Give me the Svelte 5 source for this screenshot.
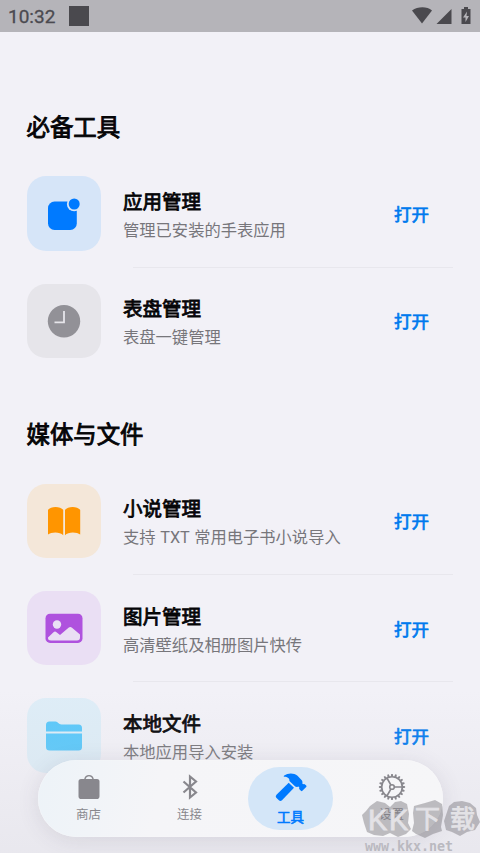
<script lang="ts">
	type Tool = { icon: string; title: string; desc: string };

	const sections: { name: string; tools: Tool[] }[] = [
		{
			name: "必备工具",
			tools: [
				{ icon: "app", title: "应用管理", desc: "管理已安装的手表应用" },
				{ icon: "clock", title: "表盘管理", desc: "表盘一键管理" },
			],
		},
		{
			name: "媒体与文件",
			tools: [
				{ icon: "book", title: "小说管理", desc: "支持 TXT 常用电子书小说导入" },
				{ icon: "photo", title: "图片管理", desc: "高清壁纸及相册图片快传" },
				{ icon: "folder", title: "本地文件", desc: "本地应用导入安装" },
			],
		},
	];

	const tabs = [
		{ icon: "shop", label: "商店" },
		{ icon: "bluetooth", label: "连接" },
		{ icon: "hammer", label: "工具" },
		{ icon: "gear", label: "设置" },
	];

	const teeth = Array.from({ length: 20 }, (_, i) => i * 18);

	let active = $state("hammer");
</script>

<div class="screen">
	<header class="status">
		<span class="time">10:32</span>
		<span class="square"></span>
		<svg class="signals" width="60" height="20" viewBox="0 0 60 20">
			<path d="M0 4.5C6 .3 15 .3 20 4.5L10 17.500z" />
			<path d="M39.500 3v15H24.500z" />
			<path d="M52 1h4v2h2.500v15h-9V3H52z" />
			<path class="bolt" d="M55 5.500l-4 6h2.500V16l3.500-6h-2.500z" />
		</svg>
	</header>

	<main>
		{#each sections as section}
			<section>
				<h2>{section.name}</h2>
				{#each section.tools as tool}
					<div class="row">
						<div class="tile {tool.icon}">
							<svg width="40" height="40" viewBox="0 0 40 40">
								{#if tool.icon === "app"}
									<rect x="4" y="7.500" width="28.800" height="28.500" rx="6.500" />
									<circle class="halo" cx="30.200" cy="10" r="7.300" />
									<circle cx="30.200" cy="10" r="5.500" />
								{:else if tool.icon === "clock"}
									<circle cx="20" cy="20.300" r="16.200" />
									<path class="cut" d="M20 10v11.300h-9.500" />
								{:else if tool.icon === "book"}
									<path d="M4 9c2.500-4 12.500-4 15.200 0v25.300c-3-3.800-12-3.500-15.200-.8z" />
									<path d="M21 9c2.700-4 12.500-4 15.200 0v24.500c-3.200-2.700-12.200-3-15.200.8z" />
								{:else if tool.icon === "photo"}
									<rect x="1.500" y="5.700" width="37" height="29.200" rx="4.500" />
									<circle class="light" cx="13" cy="16.500" r="4.200" />
									<path class="light" d="M4 29.500l5.500-5.300q1.500-1.300 3 0l3.500 2.800 8.500-7.300q1.800-1.300 3.500 0L36 26.500v3q0 3-3 3H7q-3 0-3-2.500z" />
								{:else}
									<path d="M2 15.500V9q0-3.500 3.500-3.500h6c2.500 0 3 3 6 3H34.500Q38 8.500 38 12v3.500z" />
									<path d="M2 17.500h36V31q0 3.500-3.500 3.500h-29Q2 34.500 2 31z" />
								{/if}
							</svg>
						</div>
						<div class="text">
							<h3>{tool.title}</h3>
							<p>{tool.desc}</p>
						</div>
						<button class="open">打开</button>
					</div>
				{/each}
			</section>
		{/each}
	</main>

	<div class="shade"></div>

	<nav>
		{#each tabs as tab}
			<button class="tab" class:active={active === tab.icon} onclick={() => (active = tab.icon)}>
				<svg width="32" height="32" viewBox="0 0 32 32">
					{#if tab.icon === "shop"}
						<path d="M8 8h3.200a4.900 4.900 0 0 1 9.600 0H24q2.500 0 2.500 2.500v14.700q0 2.800-2.800 2.800H8.300q-2.800 0-2.800-2.800V10.500Q5.500 8 8 8zm4.600 0h6.800a3.500 3.500 0 0 0-6.800 0z" />
					{:else if tab.icon === "bluetooth"}
						<path class="line bt" d="M9.500 10.500l12.500 11-6 5V5.500l6 5L9.500 21.500" />
					{:else if tab.icon === "hammer"}
						<path d="M9.200 4.500C13 1.800 19 1.700 22.500 4.800L26.500 9c1 1 1.200 2.200.8 3.600l.9.700q.8-.6 1.500 0l1.500 1.300q.7.700 0 1.500l-3.800 3.700q-.8.700-1.500 0l-1.500-1.500q-.7-.8 0-1.600l-.9-1.100c-1.500.6-3 .3-4.100-.9l-5-4.600c.4-2.600-1.800-4.300-5.200-4.300q-1.200-.2 0-1.300z" />
						<path d="M13.700 11.800l5.300 5L7 29.300q-1.600 1.400-3.100 0l-2.600-2.500q-1.300-1.500.2-3z" />
					{:else}
						<circle class="line" cx="16" cy="16" r="10.300" />
						<circle class="line" cx="16" cy="16" r="2.300" />
						<path class="line" d="M18.300 16h8M14.900 14l-4-7M14.900 18l-4 7" />
						{#each teeth as angle}
							<path class="tooth" d="M15.200 2.900h1.600l.4 2.600h-2.400z" transform="rotate({angle} 16 16)" />
						{/each}
					{/if}
				</svg>
				<span>{tab.label}</span>
			</button>
		{/each}
	</nav>

	<div class="mark">
		<svg width="120" height="50" viewBox="0 0 120 50">
			<path d="M8 7l7-5 8 2 5 4 5-5 6-1 6 3 2 10-1 9 3 6-5 5-8 3-8-4-7 3-9-1-7-3-3-9-2-8 4-4z" />
			<path d="M52 7l11-3 10-3 7 4 1 11-2 12 1 4-9 3-8 4-9-4-4-3 2-8-1-10z" />
			<path d="M87 7l5-4 8-1 8 2 6 5 1 7 3 7-5 8-8 2-7 4-8-4-6-2-2-9 2-6z" />
			<text x="6" y="31">K</text>
			<text x="27" y="31">K</text>
			<text x="53" y="29" class="cjk">下</text>
			<text x="88" y="29" class="cjk">载</text>
		</svg>
		<span>www.kkx.net</span>
	</div>
</div>

<style>
	:global(body) {
		margin: 0;
		background: #f2f1f7;
	}
	.screen {
		position: relative;
		width: 480px;
		height: 853px;
		overflow: hidden;
		background: #f2f1f7;
		font-family: "Noto Sans CJK SC", sans-serif;
		color: #050507;
	}
	.status {
		display: flex;
		align-items: center;
		box-sizing: border-box;
		height: 32px;
		padding: 0 8px;
		background: #b5b4b9;
	}
	.time {
		width: 61px;
		padding-top: 2px;
		font: 400 19px/34px Roboto, sans-serif;
		-webkit-text-stroke: 0.300px;
		color: #4b4a50;
	}
	.square {
		width: 20px;
		height: 20px;
		background: #4a494e;
	}
	.signals {
		margin-left: auto;
		fill: #4a494e;
	}
	.bolt {
		fill: #b5b4b9;
	}
	h2 {
		box-sizing: border-box;
		height: 92.700px;
		margin: 0;
		padding: 25px 26.500px 0;
		font-size: 23.400px;
		font-weight: 400;
		line-height: 67px;
		-webkit-text-stroke: 0.900px;
	}
	section:first-child h2 {
		height: 128px;
		padding-top: 61px;
	}
	.row {
		position: relative;
		display: flex;
		align-items: center;
		height: 107.300px;
		padding: 0 51px 0 26.500px;
	}
	.row:not(:last-child)::after {
		content: "";
		position: absolute;
		left: 133px;
		right: 27px;
		bottom: -0.500px;
		height: 1px;
		background: #e8e7ed;
	}
	.tile {
		display: grid;
		place-items: center;
		width: 74.500px;
		height: 74.500px;
		border-radius: 19px;
		background: var(--soft);
		fill: var(--ink);
	}
	.app {
		--ink: #007aff;
		--soft: #d6e5f8;
	}
	.clock {
		--ink: #929197;
		--soft: #e6e5ea;
	}
	.book {
		--ink: #ff9500;
		--soft: #f4e7d9;
	}
	.photo {
		--ink: #af52de;
		--soft: #eadff4;
	}
	.folder {
		--ink: #5ac8fa;
		--soft: #deedf7;
	}
	.halo,
	.light {
		fill: var(--soft);
	}
	.cut {
		fill: none;
		stroke: var(--soft);
		stroke-width: 1.800;
	}
	.text {
		flex: 1;
		margin-left: 22px;
	}
	h3 {
		margin: 4px 0 0;
		font-size: 19.500px;
		font-weight: 400;
		line-height: 30px;
		-webkit-text-stroke: 0.800px;
	}
	p {
		margin: 1px 0 0;
		font-family: Roboto, "Noto Sans CJK SC", sans-serif;
		font-size: 16.300px;
		line-height: 28px;
		word-spacing: 0.600px;
		color: #77767b;
	}
	button {
		padding: 0;
		border: 0;
		background: none;
		font-family: inherit;
	}
	.open {
		color: #007aee;
		font-size: 17.500px;
		font-weight: 400;
		-webkit-text-stroke: 0.700px;
	}
	.shade {
		position: absolute;
		inset: 690px 0 0;
		background: linear-gradient(transparent, rgba(205, 204, 211, 0.250));
		pointer-events: none;
	}
	nav {
		position: absolute;
		left: 38px;
		top: 760px;
		display: grid;
		grid-template-columns: repeat(4, 101px);
		align-items: center;
		box-sizing: border-box;
		width: 405px;
		height: 77px;
		border-radius: 39px;
		background: linear-gradient(100deg, #edf3f8, #f5f5f8 30%, #f6f6f8);
		box-shadow: 0 3px 22px rgba(70, 65, 90, 0.120), inset 0 0 1px #fff;
	}
	.tab {
		display: flex;
		flex-direction: column;
		align-items: center;
		justify-self: center;
		width: 85px;
		height: 63px;
		border-radius: 32px;
		color: #88878d;
		font-size: 12.500px;
		line-height: 20px;
	}
	.tab svg {
		margin: 4px 0 1px;
		fill: currentColor;
	}
	.tab.active {
		background: #d4e6f8;
		color: #007aff;
		font-size: 13.400px;
		-webkit-text-stroke: 0.600px;
	}
	.tab.active span {
		margin-top: 2px;
	}
	.line {
		fill: none;
		stroke: currentColor;
		stroke-width: 1.600;
	}
	.bt {
		stroke-width: 2.200;
	}
	.mark {
		position: absolute;
		left: 362px;
		top: 799px;
		pointer-events: none;
	}
	.mark svg {
		display: block;
		fill: rgba(125, 124, 130, 0.480);
	}
	.mark text {
		font: 400 29px "Liberation Sans", sans-serif;
		fill: #e3e2e6;
		stroke: #e3e2e6;
		stroke-width: 0.800;
	}
	.mark .cjk {
		font: 400 25px "Noto Sans CJK SC", sans-serif;
	}
	.mark span {
		position: absolute;
		left: 3px;
		top: 39px;
		font: 700 13.300px/18px "DejaVu Sans Mono", monospace;
		color: #bab9c0;
	}
</style>
